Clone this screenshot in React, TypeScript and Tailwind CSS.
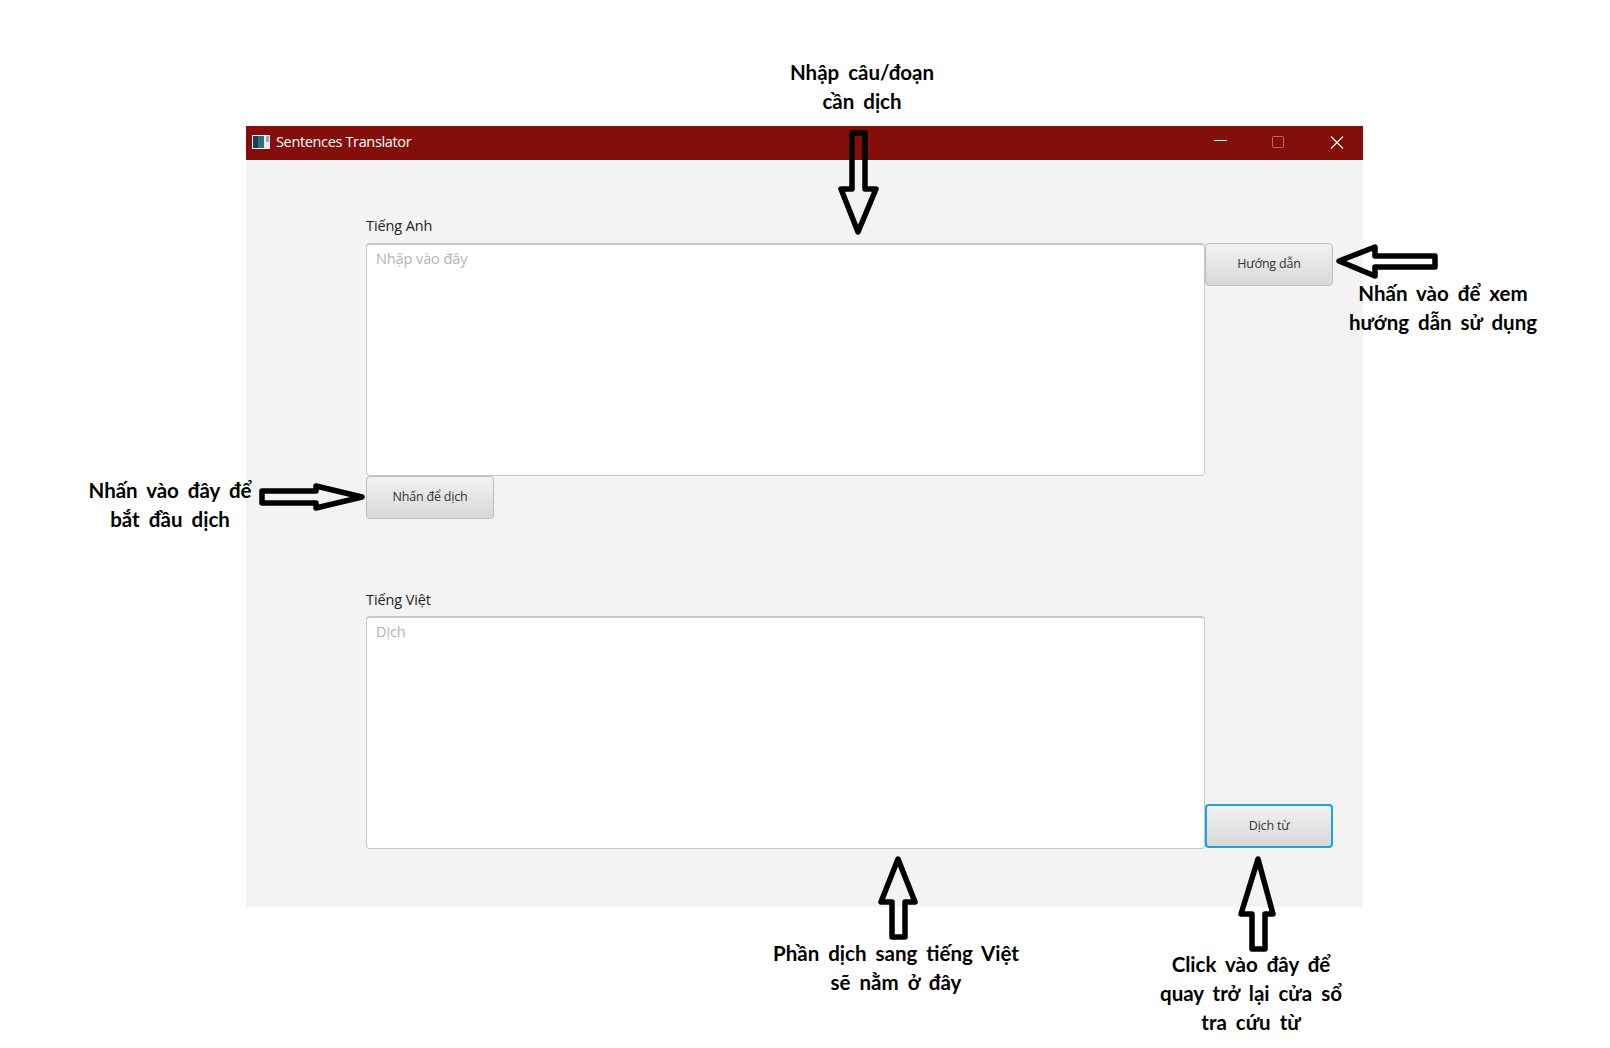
import React from "react";

const hand = "absolute text-center text-[20.5px] leading-[29px] font-bold text-black whitespace-nowrap [font-family:Lato,'Noto_Sans',sans-serif] [word-spacing:4px]";

function Arrow({ className, d, w, h }: { className: string; d: string; w: number; h: number }) {
  return (
    <svg className={className} width={w} height={h} viewBox={`0 0 ${w} ${h}`} fill="none" stroke="#000" strokeWidth="5.5" strokeLinejoin="round">
      <path d={d} />
    </svg>
  );
}

function Btn({ label, focus }: { label: string; focus?: boolean }) {
  return (
    <button
      className={
        "w-[128px] flex items-center justify-center rounded-[4px] bg-gradient-to-b from-[#f2f2f2] to-[#d8d8d8] text-[12.5px] tracking-[-0.2px] text-[#333] border " +
        (focus ? "h-[44px] mb-[1px] border-2 border-[#1ca5d8]" : "h-[43px] border-[#bdbdbd]")
      }
    >
      {label}
    </button>
  );
}

function Area({ placeholder }: { placeholder: string }) {
  return (
    <div className="w-[839px] h-[233px] rounded-[4px] border border-[#c8c8c8] border-t-2 bg-white px-[9px] pt-[3px] text-[14.5px] tracking-[-0.1px] text-[#b4b4b4]">
      {placeholder}
    </div>
  );
}

export default function App() {
  return (
    <div className="relative w-[1610px] h-[1048px] bg-white pt-[126px] pl-[246px] overflow-hidden [font-family:'Open_Sans','Noto_Sans',sans-serif]">
      <div className="w-[1117px] h-[781px] bg-[#f3f3f3] flex flex-col">
        <div className="h-[34px] bg-[#840e09] flex items-center pl-[6px] text-white">
          <svg width="18" height="14" viewBox="0 0 18 14" className="mr-[6px] -mt-[2px]">
            <rect width="18" height="14" fill="#e8ecef" />
            <rect x="1" y="1" width="11" height="12" fill="#2f6f7e" />
            <rect x="1" y="1" width="5" height="12" fill="#1c3f52" />
            <rect x="14" y="1" width="3" height="6" fill="#9ab" />
          </svg>
          <span className="text-[14.5px] tracking-[-0.35px] -mt-[2px]">Sentences Translator</span>
          <div className="ml-auto flex items-center -mt-[1px] -mr-[2px]">
            <svg width="58" height="34" viewBox="0 0 58 34" stroke="#fff" fill="none"><path d="M15 14.5h13" /></svg>
            <svg width="58" height="34" viewBox="0 0 58 34" stroke="#b5706c" fill="none" className="ml-[1px]"><rect x="14.5" y="10.5" width="11" height="11" rx="1" /></svg>
            <svg width="48" height="34" viewBox="0 0 48 34" stroke="#fff" strokeWidth="1.1" fill="none" className="ml-[1px]"><path d="M14 10.5l12 12M26 10.5l-12 12" /></svg>
          </div>
        </div>
        <div className="flex flex-col pl-[120px] pt-[56px]">
          <div className="h-[27px] text-[14.5px] leading-[20px] tracking-[-0.1px] text-[#222]">Tiếng Anh</div>
          <div className="flex">
            <Area placeholder="Nhập vào đây" />
            <Btn label="Hướng dẫn" />
          </div>
          <div>
            <Btn label="Nhấn để dịch" />
          </div>
          <div className="h-[26px] mt-[71px] text-[14.5px] leading-[20px] tracking-[-0.1px] text-[#222]">Tiếng Việt</div>
          <div className="flex items-end">
            <Area placeholder="Dịch" />
            <Btn label="Dịch từ" focus />
          </div>
        </div>
      </div>

      <div className={`${hand} left-[762px] top-[58px] w-[200px]`}>Nhập câu/đoạn<br />cần dịch</div>
      <div className={`${hand} left-[1303px] top-[279px] w-[280px]`}>Nhấn vào để xem<br />hướng dẫn sử dụng</div>
      <div className={`${hand} left-[70px] top-[476px] w-[200px]`}>Nhấn vào đây để<br />bắt đầu dịch</div>
      <div className={`${hand} left-[746px] top-[939px] w-[300px]`}>Phần dịch sang tiếng Việt<br />sẽ nằm ở đây</div>
      <div className={`${hand} left-[1131px] top-[950px] w-[240px]`}>Click vào đây để<br />quay trở lại cửa sổ<br />tra cứu từ</div>

      <Arrow className="absolute left-[836px] top-[129px]" w={44} h={108} d="M16 4h13v56h11L22 103 5 60h11z" />
      <Arrow className="absolute left-[1335px] top-[243px]" w={106} h={36} d="M4 18L40 4v9h60v11H40v9z" />
      <Arrow className="absolute left-[258px] top-[482px]" w={108} h={30} d="M4 9h54V4l46 11-46 11v-5H4z" />
      <Arrow className="absolute left-[876px] top-[855px]" w={44} h={86} d="M22 4l17 43H29v35H16V47H5z" />
      <Arrow className="absolute left-[1237px] top-[855px]" w={40} h={98} d="M21 4l15 55H28v35H15V59H4z" />
    </div>
  );
}
